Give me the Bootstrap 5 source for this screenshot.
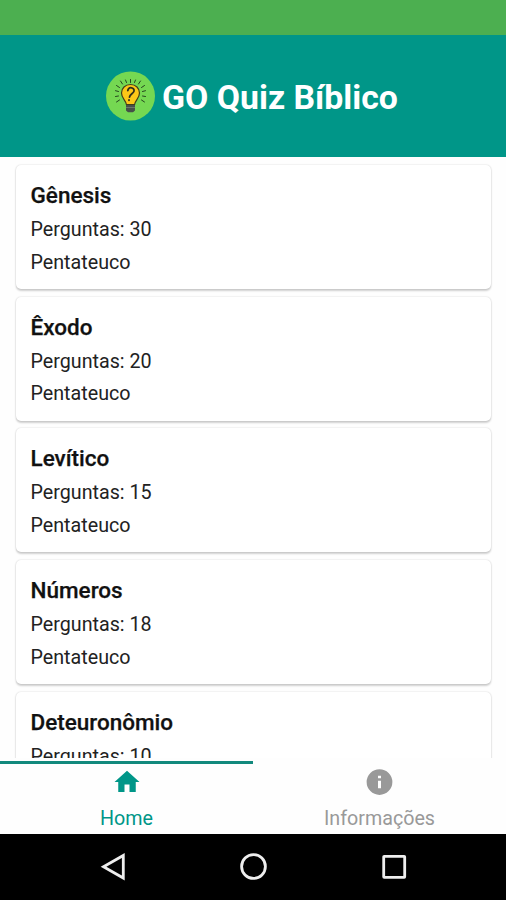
<!DOCTYPE html>
<html lang="pt-BR">
<head>
<meta charset="utf-8">
<meta name="viewport" content="width=device-width, initial-scale=1">
<title>GO Quiz Bíblico</title>
<link rel="stylesheet" href="https://cdn.jsdelivr.net/npm/bootstrap@5.3.0/dist/css/bootstrap.min.css">
<style>
  body { font-family: Roboto, "Liberation Sans", sans-serif; color: #111; }
  .status-strip { height: 34.5px; background: #4caf50; }
  .app-header { height: 122.5px; background: #009688; padding-left: 106px; }
  .app-title { font-size: 33.8px; font-weight: 700; line-height: 40px; margin-left: 7px; padding-top: 4px; white-space: nowrap; }
  .quiz-list { padding: 8px 15px 0 16px; gap: 7.7px; background: #fefefe; min-height: 0; }
  .quiz-card { --bs-card-border-width: 0; --bs-card-border-radius: 5px; height: 124px; color: #111;
    box-shadow: 0 1.5px 2px rgba(0,0,0,.18), 0 0 2px rgba(0,0,0,.14); }
  .quiz-card .card-body { padding: 14px 14.5px; }
  .quiz-name { font-size: 22.5px; font-weight: 500; line-height: 32px; margin-bottom: 3px; -webkit-text-stroke: .25px; white-space: nowrap; }
  .quiz-line { font-size: 19.7px; line-height: 32.5px; white-space: nowrap; color: #222; }
  .tab-strip { height: 76px; background: #fefefe; padding-top: 3px; }
  .tab-strip .nav-link { padding: 3px 0 0; height: 73px; border-top: 3px solid transparent; border-radius: 0; color: #999; font-size: 19.7px; line-height: 24px; }
  .tab-strip .nav-link.active { color: #009688; border-top-color: #12897d; }
  .tab-strip svg { margin-bottom: 10px; }
  .system-bar { height: 66px; background: #000; }
</style>
<script src="https://cdn.jsdelivr.net/npm/bootstrap@5.3.0/dist/js/bootstrap.bundle.min.js"></script>
</head>
<body class="vh-100 d-flex flex-column overflow-hidden bg-white">
  <div class="status-strip flex-shrink-0"></div>
  <header class="app-header flex-shrink-0 d-flex align-items-center text-white">
    <svg width="49" height="50" viewBox="0 0 49 50" aria-hidden="true">
      <circle cx="24.500" cy="25" r="24.500" fill="#75d852"/>
      <g stroke="#25451f" stroke-width="1" stroke-linecap="round">
        <path d="M24.500 8.500v3M20.500 11.500l-1-2.500M28.500 11.500l1-2.500M16.500 13l-2-3M32.500 13l2-3M13.500 16.500l-3-2M35.500 16.500l3-2M12.500 20.500l-3-.8M36.500 20.500l3-.8M12.500 25l-3 .5M36.500 25l3 .5M13.500 29l-3 2M35.500 29l3 2"/>
      </g>
      <path d="M24.500 13.500c-5.400 0-9 3.700-9 8.600 0 5.200 4.200 7.100 4.900 11.400h8.200c.7-4.300 4.900-6.200 4.900-11.400 0-4.900-3.600-8.600-9-8.600z" fill="#fcc718" stroke="#423d1b" stroke-width="1.200"/>
      <path d="M21.800 19.500c1-4.500 7-3 6.200.6-.6 2.500-4.200 3-4.500 6M23 29v.3" fill="none" stroke="#30301b" stroke-width="1.800" stroke-linecap="round"/>
      <path d="M20 34h9v5.500l-2 1.700h-5l-2-1.700z" fill="#465048"/>
      <path d="M20 36.500h9" stroke="#788073" stroke-width=".8"/>
    </svg>
    <h1 class="app-title mb-0">GO Quiz Bíblico</h1>
  </header>
  <main class="quiz-list flex-grow-1 d-flex flex-column overflow-hidden">
    <article class="quiz-card card flex-shrink-0"><div class="card-body"><h2 class="quiz-name">Gênesis</h2><p class="quiz-line mb-0">Perguntas: 30</p><p class="quiz-line mb-0">Pentateuco</p></div></article>
    <article class="quiz-card card flex-shrink-0"><div class="card-body"><h2 class="quiz-name">Êxodo</h2><p class="quiz-line mb-0">Perguntas: 20</p><p class="quiz-line mb-0">Pentateuco</p></div></article>
    <article class="quiz-card card flex-shrink-0"><div class="card-body"><h2 class="quiz-name">Levítico</h2><p class="quiz-line mb-0">Perguntas: 15</p><p class="quiz-line mb-0">Pentateuco</p></div></article>
    <article class="quiz-card card flex-shrink-0"><div class="card-body"><h2 class="quiz-name">Números</h2><p class="quiz-line mb-0">Perguntas: 18</p><p class="quiz-line mb-0">Pentateuco</p></div></article>
    <article class="quiz-card card flex-shrink-0"><div class="card-body"><h2 class="quiz-name">Deteuronômio</h2><p class="quiz-line mb-0">Perguntas: 10</p></div></article>
  </main>
  <nav class="tab-strip nav nav-fill flex-nowrap flex-shrink-0">
    <a class="nav-link active w-50 d-flex flex-column align-items-center" href="#">
      <svg width="30" height="30" viewBox="0 0 24 24" fill="currentColor" aria-hidden="true"><path d="M10 20v-6h4v6h5v-8h3L12 3 2 12h3v8z"/></svg>
      <span>Home</span>
    </a>
    <a class="nav-link w-50 d-flex flex-column align-items-center" href="#">
      <svg width="31" height="30" viewBox="0 0 24 24" fill="currentColor" aria-hidden="true"><path d="M12 1.700a10.300 10.300 0 1 0 0 20.600 10.300 10.300 0 0 0 0-20.600zm1.200 15.300h-2.400v-6h2.400zm0-8h-2.400V7h2.400z"/></svg>
      <span>Informações</span>
    </a>
  </nav>
  <footer class="system-bar flex-shrink-0">
    <svg class="d-block" width="506" height="66" viewBox="0 0 506 66" fill="none" stroke="#eee" stroke-width="2.800" aria-hidden="true">
      <path d="M123.300 21.500v22.500L103.500 32.700z"/>
      <circle cx="253.500" cy="32.500" r="11.900"/>
      <rect x="383.700" y="22.300" width="21" height="21" rx=".5"/>
    </svg>
  </footer>
</body>
</html>
